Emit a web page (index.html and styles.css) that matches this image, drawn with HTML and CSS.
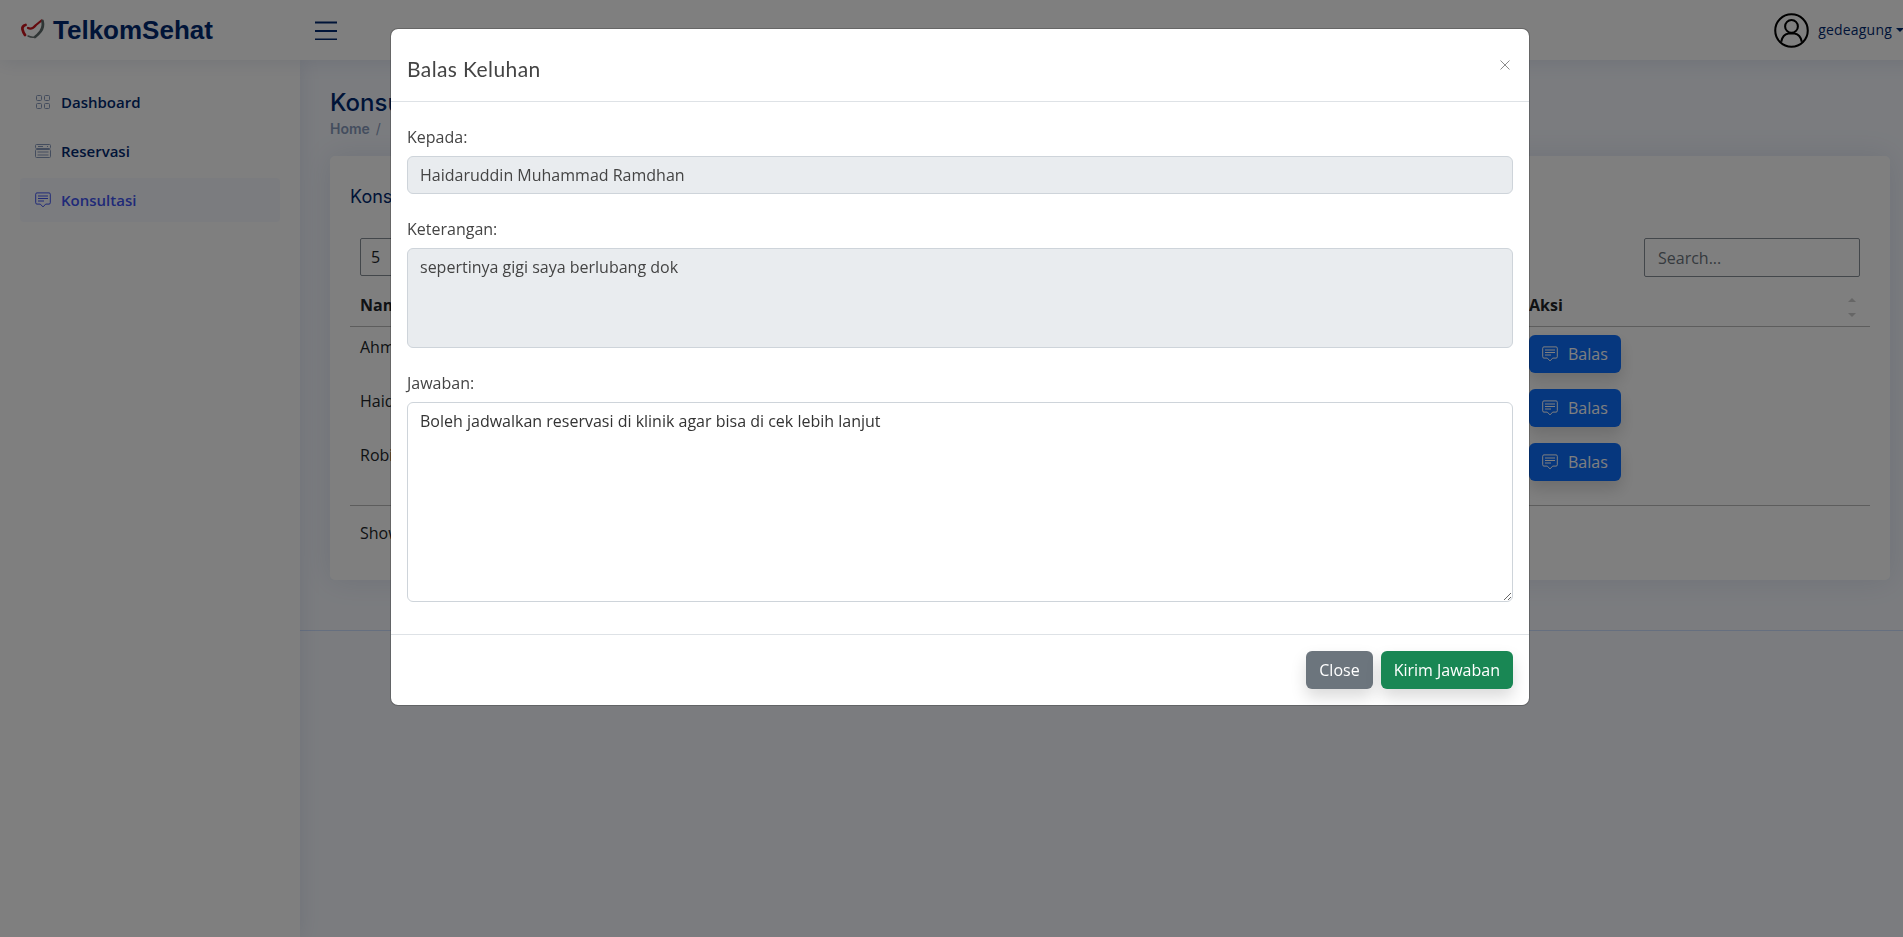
FILE: index.html
```html
<!DOCTYPE html>
<html lang="id">
<head>
<meta charset="utf-8">
<title>TelkomSehat</title>
<link rel="stylesheet" href="styles.css">
</head>
<body>
<div class="page">
  <header class="topbar">
    <div class="brand">
      <svg class="brand-mark" viewBox="0 0 26 22" fill="none" stroke-linecap="round" stroke-linejoin="round">
        <path d="M8 9 C11 10.500 14 8.500 16 6 L21.500 1.500" stroke="#c9141c" stroke-width="2.200"/>
        <path d="M5.500 6 C3 6.500 2 8.500 2.500 10.500 C3 12.500 3.500 14.500 5 16" stroke="#c9141c" stroke-width="2.800"/>
        <path d="M22.500 2 C23.500 6 23 9 20.500 12.500 C18.500 15 17 16.500 15 18" stroke="#5f6b6a" stroke-width="2.800"/>
        <path d="M15 18 C12.500 18.500 10 18 8 17" stroke="#6d7675" stroke-width="1.400"/>
      </svg>
      <span class="brand-name">TelkomSehat</span>
    </div>
    <svg class="burger" viewBox="0 0 22 18" fill="none" stroke="#012970" stroke-width="1.8">
      <path d="M0 1h22M0 9.5h22M0 18h22"/>
    </svg>
    <div class="profile">
      <svg class="avatar" viewBox="0 0 34 34" fill="none" stroke="#000" stroke-width="2">
        <circle cx="17" cy="17" r="15.8"/>
        <circle cx="17" cy="13" r="6.2"/>
        <path d="M7 28 C8 23 11 20.5 14 20 H20 C23 20.5 26 23 27 28"/>
      </svg>
      <span class="profile-name">gedeagung</span>
      <span class="caret"></span>
    </div>
  </header>

  <div class="shell">
    <aside class="sidebar">
      <nav class="nav">
        <a class="nav-link">
          <svg class="nav-icon" viewBox="0 0 16 16" fill="none" stroke="currentColor">
            <rect x="1.5" y="1.5" width="5" height="5" rx="1"/><rect x="9.5" y="1.5" width="5" height="5" rx="1"/>
            <rect x="1.5" y="9.5" width="5" height="5" rx="1"/><rect x="9.5" y="9.5" width="5" height="5" rx="1"/>
          </svg>
          <span>Dashboard</span>
        </a>
        <a class="nav-link">
          <svg class="nav-icon" viewBox="0 0 16 16" fill="none" stroke="currentColor">
            <rect x=".5" y="1.5" width="15" height="4" rx="1"/><path d="M3 3.5h5M12 3.5h1"/>
            <rect x=".5" y="6.5" width="15" height="8" rx="1"/><path d="M2.5 9h11M2.5 12h11"/>
          </svg>
          <span>Reservasi</span>
        </a>
        <a class="nav-link is-active">
          <svg class="nav-icon" viewBox="0 0 16 16" fill="none" stroke="currentColor">
            <path d="M2 .9h12a1.3 1.3 0 0 1 1.3 1.3v8.6a1.3 1.3 0 0 1-1.3 1.3h-3.3L8 14.9 5.3 12.1H2A1.3 1.3 0 0 1 .7 10.8V2.2A1.3 1.3 0 0 1 2 .9z"/>
            <path d="M3 4h10M3 6.5h10M3 9h6"/>
          </svg>
          <span>Konsultasi</span>
        </a>
      </nav>
    </aside>

    <div class="content">
      <main class="main">
        <div class="pagetitle">
          <h1>Konsultasi</h1>
          <div class="crumbs"><span class="crumb-link">Home</span><span class="crumb-sep">/</span><span class="crumb-current">Konsultasi</span></div>
        </div>
        <section class="card">
          <h2 class="card-title">Konsultasi</h2>
          <div class="dt-top">
            <div class="dt-length">5</div>
            <input class="dt-search" type="text" placeholder="Search...">
          </div>
          <table class="dt">
            <colgroup><col class="col-main"><col class="col-action"></colgroup>
            <thead>
              <tr><th>Nama</th><th class="th-action">Aksi<span class="sort-up"></span><span class="sort-down"></span></th></tr>
            </thead>
            <tbody>
              <tr>
                <td>Ahmad</td>
                <td><button class="btn btn-primary"><svg class="btn-icon" viewBox="0 0 16 16" fill="none" stroke="currentColor"><path d="M2 .9h12a1.3 1.3 0 0 1 1.3 1.3v8.6a1.3 1.3 0 0 1-1.3 1.3h-3.3L8 14.9 5.3 12.1H2A1.3 1.3 0 0 1 .7 10.8V2.2A1.3 1.3 0 0 1 2 .9z"/><path d="M3 4h10M3 6.5h10M3 9h6"/></svg>Balas</button></td>
              </tr>
              <tr>
                <td>Haidaruddin Muhammad Ramdhan</td>
                <td><button class="btn btn-primary"><svg class="btn-icon" viewBox="0 0 16 16" fill="none" stroke="currentColor"><path d="M2 .9h12a1.3 1.3 0 0 1 1.3 1.3v8.6a1.3 1.3 0 0 1-1.3 1.3h-3.3L8 14.9 5.3 12.1H2A1.3 1.3 0 0 1 .7 10.8V2.2A1.3 1.3 0 0 1 2 .9z"/><path d="M3 4h10M3 6.5h10M3 9h6"/></svg>Balas</button></td>
              </tr>
              <tr>
                <td>Robi</td>
                <td><button class="btn btn-primary"><svg class="btn-icon" viewBox="0 0 16 16" fill="none" stroke="currentColor"><path d="M2 .9h12a1.3 1.3 0 0 1 1.3 1.3v8.6a1.3 1.3 0 0 1-1.3 1.3h-3.3L8 14.9 5.3 12.1H2A1.3 1.3 0 0 1 .7 10.8V2.2A1.3 1.3 0 0 1 2 .9z"/><path d="M3 4h10M3 6.5h10M3 9h6"/></svg>Balas</button></td>
              </tr>
            </tbody>
          </table>
          <div class="dt-bottom">Showing 1 to 3 of 3 entries</div>
        </section>
      </main>
      <footer class="footer"></footer>
    </div>
  </div>
</div>

<div class="backdrop"></div>
<div class="modal">
  <div class="modal-header">
    <h5 class="modal-title">Balas Keluhan</h5>
    <svg class="modal-close" viewBox="0 0 16 16" fill="none" stroke="#000" stroke-width=".9"><path d="M3.500 3.500l9 9M12.500 3.500l-9 9"/></svg>
  </div>
  <div class="modal-body">
    <div class="field">
      <label class="field-label">Kepada:</label>
      <input class="control control-readonly" type="text" value="Haidaruddin Muhammad Ramdhan" readonly>
    </div>
    <div class="field">
      <label class="field-label">Keterangan:</label>
      <textarea class="control control-readonly area-short" readonly>sepertinya gigi saya berlubang dok</textarea>
    </div>
    <div class="field field-last">
      <label class="field-label">Jawaban:</label>
      <textarea class="control area-tall">Boleh jadwalkan reservasi di klinik agar bisa di cek lebih lanjut</textarea>
    </div>
  </div>
  <div class="modal-footer">
    <button class="btn btn-secondary">Close</button>
    <button class="btn btn-success">Kirim Jawaban</button>
  </div>
</div>
</body>
</html>
```

FILE: styles.css
```css
* { box-sizing: border-box; }

html, body { margin: 0; height: 100%; overflow: hidden; }

body {
  font-family: "Open Sans", sans-serif;
  font-size: 16px;
  line-height: 24px;
  color: #444;
  background: #f6f9ff;
}

.page { width: 1920px; min-height: 937px; }

/* Top bar */
.topbar {
  display: flex;
  align-items: center;
  height: 60px;
  padding-left: 20px;
  background: #fff;
  box-shadow: 0 2px 20px rgba(1, 41, 112, .1);
  position: relative;
  z-index: 2;
}

.brand { display: flex; align-items: center; width: 295px; }
.brand-mark { width: 26px; height: 22px; margin-right: 7px; }
.brand-name {
  font-family: "Liberation Sans", Arial, sans-serif;
  font-weight: 700;
  font-size: 26px;
  line-height: 32px;
  color: #012970;
}

.burger { width: 22px; height: 19px; }

.profile { display: flex; align-items: center; margin-left: auto; padding-right: 16px; }
.avatar { width: 35px; height: 35px; margin-right: 9px; }
.profile-name { font-size: 14px; font-weight: 500; letter-spacing: .2px; color: #012970; }
.caret {
  margin-left: 4px;
  border-top: 4px solid #012970;
  border-left: 4px solid transparent;
  border-right: 4px solid transparent;
}

/* Shell */
.shell { display: flex; min-height: 877px; }

.sidebar {
  width: 300px;
  flex: none;
  padding: 20px;
  background: #fff;
  box-shadow: 0 0 20px rgba(1, 41, 112, .1);
  position: relative;
  z-index: 1;
}

.nav { display: flex; flex-direction: column; gap: 5px; }
.nav-link {
  display: flex;
  align-items: center;
  height: 44px;
  padding: 0 15px;
  border-radius: 4px;
  font-size: 15px;
  font-weight: 600;
  color: #012970;
}
.nav-icon { width: 16px; height: 16px; margin-right: 10px; color: #899bbd; flex: none; }
.nav-link.is-active { background: #f6f9ff; color: #4154f1; }
.nav-link.is-active .nav-icon { color: #4154f1; }

.content { flex: 1; min-width: 0; }

.main { padding: 28px 30px 20px; }

.pagetitle { margin-bottom: 17px; }
.pagetitle h1 {
  margin: 0;
  font-family: Inter, sans-serif;
  font-size: 24px;
  font-weight: 500;
  line-height: 29px;
  color: #012970;
}
.crumbs {
  display: flex;
  margin-top: 1px;
  font-family: Inter, sans-serif;
  font-size: 14px;
  line-height: 21px;
  font-weight: 600;
  color: #899bbd;
}
.crumb-sep { margin: 0 10px 0 6px; font-weight: 400; }

/* Card */
.card {
  margin-bottom: 30px;
  padding: 30px 20px 20px;
  background: #fff;
  border-radius: 5px;
  box-shadow: 0 0 30px rgba(1, 41, 112, .1);
}
.card-title {
  margin: 0 0 30px;
  font-family: Inter, sans-serif;
  font-size: 18px;
  font-weight: 400;
  line-height: 22px;
  color: #012970;
}

.dt-top { display: flex; justify-content: space-between; padding: 0 10px 8px; }
.dt-length {
  width: 70px;
  height: 38px;
  padding: 6px 10px;
  border: 1px solid #868e96;
  border-radius: 2px;
  color: #212529;
}
.dt-search {
  width: 216px;
  height: 39px;
  padding: 6px 13px;
  border: 1px solid #868e96;
  border-radius: 2px;
  font: inherit;
  background: #fff;
}
.dt-search::placeholder { color: #6c757d; opacity: 1; }

.dt { width: 100%; border-collapse: collapse; table-layout: fixed; color: #212529; }
.col-action { width: 351px; }
.dt th {
  height: 41px;
  padding: 8px 10px;
  text-align: left;
  font-weight: 700;
  border-bottom: 1px solid #bbb;
}
.dt td { height: 54px; padding: 8px 10px; vertical-align: top; white-space: nowrap; }
.dt .th-action { position: relative; }

.sort-up, .sort-down {
  position: absolute;
  right: 14px;
  border-left: 4px solid transparent;
  border-right: 4px solid transparent;
}
.sort-up { top: 13px; border-bottom: 4px solid #ccc; }
.sort-down { top: 28px; border-top: 4px solid #ccc; }

.dt-bottom {
  margin-top: 16px;
  padding: 15px 10px;
  border-top: 1px solid #bbb;
  color: #212529;
}

.footer { height: 60px; border-top: 1px solid #cddfff; }

/* Buttons */
.btn {
  display: inline-flex;
  align-items: center;
  height: 38px;
  padding: 0 13px;
  border: 0;
  border-radius: 6px;
  font: inherit;
  color: #fff;
  box-shadow: 0 8px 16px rgba(0, 0, 0, .15);
}
.btn-primary { background: #0d6efd; }
.btn-secondary { background: #6c757d; }
.btn-success { background: #198754; }
.btn-icon { width: 16px; height: 16px; margin-right: 10px; flex: none; }

/* Modal */
.backdrop { position: fixed; inset: 0; background: rgba(0, 0, 0, .5); z-index: 10; }

.modal {
  position: fixed;
  top: 28px;
  left: 390px;
  width: 1140px;
  background: #fff;
  background-clip: padding-box;
  border: 1px solid rgba(0, 0, 0, .2);
  border-radius: 8px;
  z-index: 11;
}

.modal-header {
  display: flex;
  align-items: center;
  justify-content: space-between;
  height: 73px;
  padding: 16px;
  border-bottom: 1px solid #dee2e6;
}
.modal-title {
  margin: 0;
  padding-top: 8px;
  font-family: Lato, sans-serif;
  font-size: 21px;
  font-weight: 400;
  line-height: 32px;
  letter-spacing: .4px;
  color: #444;
}
.modal-close { width: 16px; height: 16px; opacity: .5; }

.modal-body { padding: 23px 16px 16px; }
.field { margin-bottom: 23px; }
.field-last { margin-bottom: 16px; }
.field-label { display: block; margin-bottom: 7px; }

.control {
  display: block;
  width: 100%;
  height: 38px;
  padding: 6px 12px;
  border: 1px solid #ced4da;
  border-radius: 6px;
  font: inherit;
  color: #444;
  background: #fff;
  outline: 0;
}
.control-readonly { background: #e9ecef; }
textarea.control { resize: vertical; }
textarea.control-readonly { resize: none; }
.area-short { height: 100px; }
.area-tall { height: 200px; color: #333; }

.modal-footer {
  display: flex;
  justify-content: flex-end;
  gap: 8px;
  padding: 16px;
  border-top: 1px solid #dee2e6;
}
```
